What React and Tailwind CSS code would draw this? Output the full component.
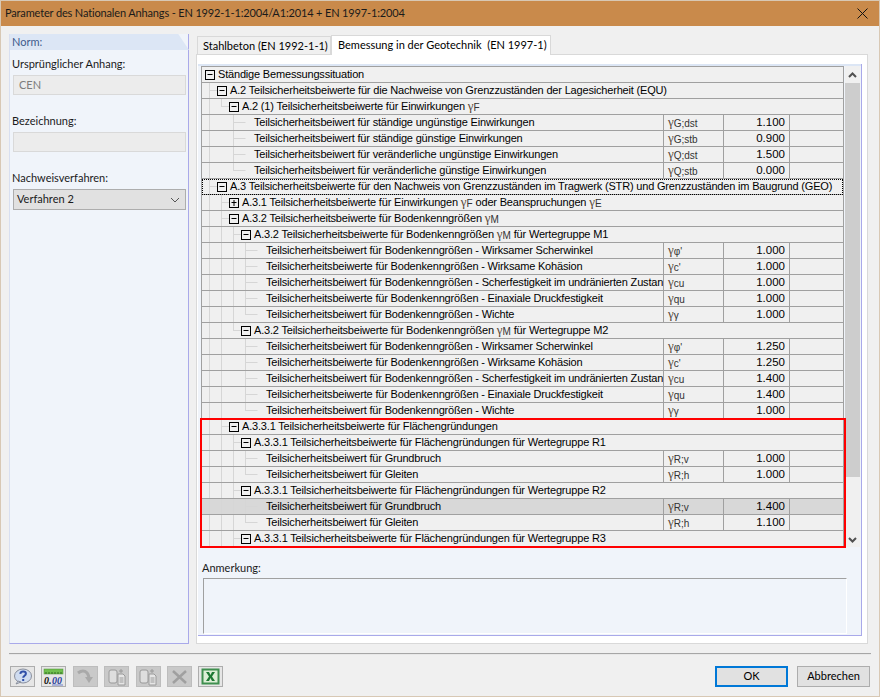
import { Fragment } from "react";

const uiFont = "font-['Lato','Open_Sans',sans-serif] text-[11px]";

function Gamma({ sub }) {
    return (
        <span className="text-[#333333] tracking-normal leading-none">
            <span className="font-['Liberation_Serif',serif] text-[13px] leading-none text-[#5a4a3a]">γ</span>
            <span className="text-[10px] leading-none relative top-[1px]">{sub}</span>
        </span>
    );
}

const gM = <Gamma sub="M" />;
const gF = <Gamma sub="F" />;
const gE = <Gamma sub="E" />;
const bw = "Teilsicherheitsbeiwert für ";
const bd = "Teilsicherheitsbeiwerte für Bodenkenngrößen";
const fg = "A.3.3.1 Teilsicherheitsbeiwerte für Flächengründungen";

const rows = [
    { l: 0, t: "Ständige Bemessungssituation" },
    { l: 1, t: "A.2 Teilsicherheitsbeiwerte für die Nachweise von Grenzzuständen der Lagesicherheit (EQU)" },
    { l: 2, t: <>A.2 (1) Teilsicherheitsbeiwerte für Einwirkungen {gF}</> },
    { l: 3, t: bw + "ständige ungünstige Einwirkungen", s: "G;dst", v: "1.100" },
    { l: 3, t: bw + "ständige günstige Einwirkungen", s: "G;stb", v: "0.900" },
    { l: 3, t: bw + "veränderliche ungünstige Einwirkungen", s: "Q;dst", v: "1.500" },
    { l: 3, t: bw + "veränderliche günstige Einwirkungen", s: "Q;stb", v: "0.000" },
    { l: 1, focus: true, t: "A.3 Teilsicherheitsbeiwerte für den Nachweis von Grenzzuständen im Tragwerk (STR) und Grenzzuständen im Baugrund (GEO)" },
    { l: 2, plus: true, t: <>A.3.1 Teilsicherheitsbeiwerte für Einwirkungen {gF} oder Beanspruchungen {gE}</> },
    { l: 2, t: <>A.3.2 {bd} {gM}</> },
    { l: 3, t: <>A.3.2 {bd} {gM} für Wertegruppe M1</> },
    { l: 4, t: bw + "Bodenkenngrößen - Wirksamer Scherwinkel", s: "φ'", v: "1.000" },
    { l: 4, t: "Teilsicherheitsbeiwerte für Bodenkenngrößen - Wirksame Kohäsion", s: "c'", v: "1.000" },
    { l: 4, t: bw + "Bodenkenngrößen - Scherfestigkeit im undränierten Zustand", s: "cu", v: "1.000" },
    { l: 4, t: "Teilsicherheitsbeiwerte für Bodenkenngrößen - Einaxiale Druckfestigkeit", s: "qu", v: "1.000" },
    { l: 4, t: bw + "Bodenkenngrößen - Wichte", s: "γ", v: "1.000" },
    { l: 3, t: <>A.3.2 {bd} {gM} für Wertegruppe M2</> },
    { l: 4, t: bw + "Bodenkenngrößen - Wirksamer Scherwinkel", s: "φ'", v: "1.250" },
    { l: 4, t: "Teilsicherheitsbeiwerte für Bodenkenngrößen - Wirksame Kohäsion", s: "c'", v: "1.250" },
    { l: 4, t: bw + "Bodenkenngrößen - Scherfestigkeit im undränierten Zustand", s: "cu", v: "1.400" },
    { l: 4, t: "Teilsicherheitsbeiwerte für Bodenkenngrößen - Einaxiale Druckfestigkeit", s: "qu", v: "1.400" },
    { l: 4, t: bw + "Bodenkenngrößen - Wichte", s: "γ", v: "1.000" },
    { l: 2, t: fg },
    { l: 3, t: fg + " für Wertegruppe R1" },
    { l: 4, t: bw + "Grundbruch", s: "R;v", v: "1.000" },
    { l: 4, t: bw + "Gleiten", s: "R;h", v: "1.000" },
    { l: 3, t: fg + " für Wertegruppe R2" },
    { l: 4, t: bw + "Grundbruch", s: "R;v", v: "1.400", selected: true },
    { l: 4, t: bw + "Gleiten", s: "R;h", v: "1.100" },
    { l: 3, t: fg + " für Wertegruppe R3" },
];

// does the vertical guide of depth d carry on below row i
const continues = (i, d) => {
    for (let j = i + 1; j < rows.length; j++) {
        if (rows[j].l === d + 1) return true;
        if (rows[j].l <= d) return false;
    }
    return d < 4;
};

function Guides({ i, row }) {
    const w = 16 + row.l * 12;
    const isNode = row.s === undefined;
    const cx = (d) => 7.5 + d * 12;
    return (
        <svg width={w} height={15} className="shrink-0 block">
            {Array.from({ length: row.l }, (_, d) => {
                const own = d === row.l - 1;
                const goesOn = continues(i, d);
                if (!own && !goesOn) return null;
                return (
                    <line key={d} x1={cx(d)} x2={cx(d)} y1={0} y2={own && !goesOn ? 8 : 15} stroke="#d6d6d6" />
                );
            })}
            {row.l > 0 && (
                <line x1={cx(row.l - 1)} x2={cx(row.l - 1) + (isNode ? 8 : 12)} y1={7.5} y2={7.5} stroke="#d6d6d6" />
            )}
            {isNode && (
                <g>
                    <rect x={cx(row.l) - 4} y={3.5} width={9} height={9} fill="#f0f0f0" stroke="#000" />
                    <line x1={cx(row.l) - 2} x2={cx(row.l) + 3} y1={7.5} y2={7.5} stroke="#000" />
                    {row.plus && <line x1={cx(row.l) + 0.5} x2={cx(row.l) + 0.5} y1={5} y2={11} stroke="#000" />}
                </g>
            )}
        </svg>
    );
}

function TreeRow({ i, row }) {
    const bg = row.selected ? "bg-[#d8d8d8]" : "bg-[#f0f0f0]";
    const focus = row.focus ? "outline-1 outline-dotted outline-black -outline-offset-1" : "";
    return (
        <div className={`flex h-4 border-b border-[#a0a0a0] ${bg} ${focus}`}>
            <div className="flex flex-1 min-w-0 overflow-hidden">
                <Guides i={i} row={row} />
                <div className="whitespace-nowrap leading-[15px]">{row.t}</div>
            </div>
            {row.s && (
                <Fragment>
                    <div className="w-[60px] shrink-0 border-l border-[#a0a0a0] pl-[4px] leading-[15px] whitespace-nowrap overflow-hidden">
                        <Gamma sub={row.s} />
                    </div>
                    <div className="w-[66px] shrink-0 border-l border-[#a0a0a0] pr-[4px] text-right leading-[15px] text-[11.5px] tracking-normal">{row.v}</div>
                    <div className="w-[54px] shrink-0 border-l border-[#a0a0a0]" />
                </Fragment>
            )}
        </div>
    );
}

function TreeTable() {
    return (
        <div className="relative w-[643px] h-[481px] shrink-0 border-l border-t border-r border-[#a0a0a0] font-['Liberation_Sans',sans-serif] text-[11px] tracking-[-0.18px] text-black">
            {rows.map((row, i) => (
                <TreeRow key={i} i={i} row={row} />
            ))}
            <div className="absolute left-[-2px] top-[351px] w-[646px] h-[130px] border-2 border-[#ff0000] pointer-events-none" />
        </div>
    );
}

function ScrollBar() {
    return (
        <div className="w-[15px] h-[481px] ml-[1px] flex flex-col bg-[#f0f0f0]">
            <div className="h-[17px] flex items-center justify-center">
                <svg width="9" height="6" viewBox="0 0 9 6"><path d="M1 5l3.5-3.5L8 5" fill="none" stroke="#505050" strokeWidth="2" /></svg>
            </div>
            <div className="h-[394px] bg-[#cdcdcd]" />
            <div className="flex-1 flex items-end justify-center pb-[4px]">
                <svg width="9" height="6" viewBox="0 0 9 6"><path d="M1 1l3.5 3.5L8 1" fill="none" stroke="#505050" strokeWidth="2" /></svg>
            </div>
        </div>
    );
}

function LeftPanel() {
    return (
        <div className={`w-[180px] h-[610px] shrink-0 bg-[#f0f4fa] border-r border-b border-l border-[#a9a9ea] border-l-[#d8dff0] ${uiFont}`}>
            <div className="h-4 bg-[#dce6f5] pl-[2px] leading-[15px] text-[#3c5a8c] [clip-path:polygon(0_0,94%_0,100%_100%,0_100%)] -mr-[1px]">Norm:</div>
            <div className="px-[2px] text-[#1a1a1a]">
                <div className="mt-[6px] leading-[16px]">Ursprünglicher Anhang:</div>
                <div className="mt-[3px] ml-[1px] w-[173px] h-[20px] bg-[#ececec] border border-[#d9d9d9] pl-[5px] leading-[18px] text-[#7d7d7d]">CEN</div>
                <div className="mt-[18px] leading-[16px]">Bezeichnung:</div>
                <div className="mt-[3px] ml-[1px] w-[173px] h-[20px] bg-[#ececec] border border-[#d9d9d9]" />
                <div className="mt-[18px] leading-[16px]">Nachweisverfahren:</div>
                <div className="mt-[3px] ml-[1px] w-[173px] h-[21px] bg-[#e1e1e1] border border-[#adadad] pl-[3px] pr-[5px] flex items-center justify-between">
                    <span>Verfahren 2</span>
                    <svg width="10" height="6" viewBox="0 0 10 6"><path d="M1 1l4 4 4-4" fill="none" stroke="#555" /></svg>
                </div>
            </div>
        </div>
    );
}

function Tabs() {
    return (
        <div className={`flex items-end h-5 pl-[1px] ${uiFont} text-black`}>
            <div className="w-[134px] h-[18px] border border-b-0 border-[#d9d9d9] bg-[#f0f0f0] pl-[5px] leading-[18px]">Stahlbeton (EN 1992-1-1)</div>
            <div className="w-[220px] h-[20px] -mb-[1px] relative border border-b-0 border-[#d9d9d9] bg-white pl-[6px] leading-[18px] whitespace-pre">Bemessung in der Geotechnik  (EN 1997-1)</div>
        </div>
    );
}

function RightPanel() {
    return (
        <div className="w-[672px] h-[610px] shrink-0 flex flex-col">
            <Tabs />
            <div className="h-[590px] bg-white border border-[#d9d9d9] pl-[1px] pr-[5px] pt-[9px] pb-[7px]">
                <div className="h-full bg-[#f0f4fa] border-r border-b border-[#a9a9ea] flex flex-col">
                    <div className="h-[2px] bg-[#dce6f5] shrink-0" />
                    <div className="flex pl-[3px]">
                        <TreeTable />
                        <ScrollBar />
                    </div>
                    <div className={`pl-[4px] mt-[13px] leading-[16px] text-[#1a1a1a] ${uiFont}`}>Anmerkung:</div>
                    <div className="ml-[5px] mt-[2px] w-[644px] flex-1 border-t border-l border-[#a0a0a0] border-r-white border-r border-b border-b-white mb-[1px]" />
                </div>
            </div>
        </div>
    );
}

function ToolButton({ disabled, children }) {
    const look = disabled ? "bg-[#c9c9c9] border-[#bdbdbd]" : "bg-[#e6e6e6] border-[#adadad]";
    return <div className={`w-[25px] h-[21px] flex items-center justify-center border ${look}`}>{children}</div>;
}

function Toolbar() {
    return (
        <div className="flex gap-[6.4px] ml-[1px]">
            <ToolButton>
                <svg width="20" height="17" viewBox="0 0 20 17">
                    <ellipse cx="10" cy="8" rx="8.5" ry="7" fill="#cfdcf0" stroke="#8a8f9c" />
                    <path d="M5 13l-2 3 5-2z" fill="#cfdcf0" stroke="#8a8f9c" />
                    <path d="M7.3 5.8c.4-3 5.6-3 5.6 0 0 2-2.700 2-2.700 4" fill="none" stroke="#2f4fa8" strokeWidth="2" />
                    <rect x="9.200" y="11" width="2" height="2" fill="#2f4fa8" />
                </svg>
            </ToolButton>
            <ToolButton>
                <svg width="21" height="18" viewBox="0 0 21 18">
                    <rect x="1" y="1" width="19" height="5" fill="#6fbf4e" stroke="#4c8f35" strokeWidth="0.5" />
                    <path d="M3 4v2M6 4v2M9 4v2M12 4v2M15 4v2M18 4v2" stroke="#2f6a20" />
                    <rect x="9" y="16.500" width="11" height="1" fill="#6c7cc8" />
                    <text x="1" y="15.500" fontFamily="'Liberation Serif', serif" fontStyle="italic" fontWeight="700" fontSize="10" fill="#111">0.</text>
                    <text x="9" y="15.500" fontFamily="'Liberation Serif', serif" fontStyle="italic" fontWeight="700" fontSize="10" fill="#2a3f9a">00</text>
                </svg>
            </ToolButton>
            <ToolButton disabled>
                <svg width="18" height="17" viewBox="0 0 18 17">
                    <path d="M2 5c5-4 10-2 11 5" fill="none" stroke="#a9a9a9" strokeWidth="3" />
                    <path d="M9 9h8l-4 6z" fill="#a9a9a9" />
                </svg>
            </ToolButton>
            {[0, 1].map((k) => (
                <ToolButton disabled key={k}>
                    <svg width="20" height="18" viewBox="0 0 20 18">
                        <rect x="2" y="2" width="8" height="13" rx="2" fill="#dedede" stroke="#9a9a9a" />
                        <path d="M11 6h5l2 2v9h-7z" fill="#e6e6e6" stroke="#9a9a9a" />
                        <path d="M12.500 10h4M12.500 12h4M12.500 14h4" stroke="#9a9a9a" />
                        <path d="M14 1v4M12 3h4" stroke="#9a9a9a" />
                    </svg>
                </ToolButton>
            ))}
            <ToolButton disabled>
                <svg width="17" height="16" viewBox="0 0 17 16">
                    <path d="M2 2l13 12M15 2L2 14" stroke="#a0a0a0" strokeWidth="2.500" />
                </svg>
            </ToolButton>
            <ToolButton>
                <svg width="19" height="17" viewBox="0 0 19 17">
                    <rect x="0.500" y="0.500" width="18" height="16" fill="#3f8f4f" />
                    <rect x="2.500" y="2.500" width="14" height="12" fill="#dcefd6" />
                    <path d="M5 4l3 4.500L5 13h3l1.500-3L11 13h3l-3-4.500L14 4h-3L9.500 7 8 4z" fill="#1e7a34" />
                </svg>
            </ToolButton>
        </div>
    );
}

export default function App() {
    return (
        <div className="w-[880px] h-[697px] flex flex-col bg-[#f0f0f0] border-x border-b border-[#d8c8b4] overflow-hidden">
            <div className="h-[26px] shrink-0 -mx-[1px] bg-[#c98a4b] border-t border-[#d8c8b4] pl-[5px] pr-[12px] flex items-center justify-between font-['Lato','Open_Sans',sans-serif] text-[11px] tracking-[-0.15px] text-[#1a1a1a]">
                <span>Parameter des Nationalen Anhangs - EN 1992-1-1:2004/A1:2014 + EN 1997-1:2004</span>
                <svg width="11" height="11" viewBox="0 0 11 11"><path d="M.5.500l10 10M10.500.500l-10 10" stroke="#111" /></svg>
            </div>
            <div className="flex gap-[7px] pt-2 pl-2">
                <LeftPanel />
                <RightPanel />
            </div>
            <div className="mt-[9px] mx-2 h-[2px] bg-[#a6a6a6] border-b border-[#e8e8e8]" />
            <div className="flex items-start justify-between pt-[11px] pl-2 pr-[9px]">
                <Toolbar />
                <div className={`flex gap-[9px] ${uiFont} text-black`}>
                    <div className="w-[73px] h-[21px] border-2 border-[#0078d7] bg-[#e1e1e1] flex items-center justify-center">OK</div>
                    <div className="w-[73px] h-[21px] border border-[#adadad] bg-[#e1e1e1] flex items-center justify-center">Abbrechen</div>
                </div>
            </div>
        </div>
    );
}
